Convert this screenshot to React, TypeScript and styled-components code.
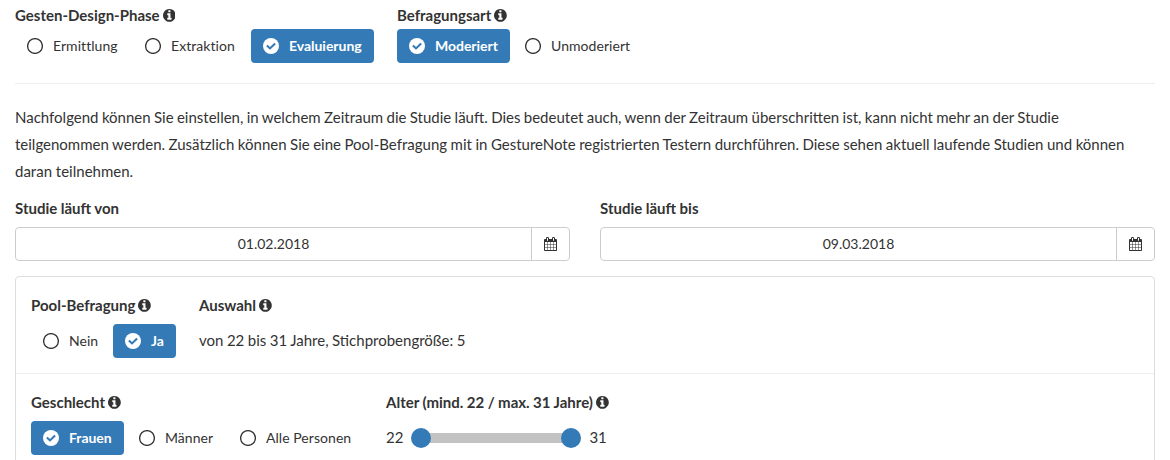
import React from "react";
import styled, { createGlobalStyle, css } from "styled-components";

const GlobalStyle = createGlobalStyle`
  * { box-sizing: border-box; }
  body {
    margin: 0;
    overflow: hidden;
    background: #fff;
    color: #333;
    font: 15px/27px Lato, sans-serif;
  }
`;

const Page = styled.main`
  height: 460px;
  padding: 0 15px;
  overflow: hidden;
`;

const Row = styled.div<{ $gap: number }>`
  display: flex;
  gap: ${(p) => p.$gap}px;
`;

const Label = styled.div`
  display: flex;
  align-items: center;
  height: 27px;
  font-weight: 700;
  word-spacing: -0.2px;
  white-space: nowrap;
  svg { width: 12.8px; height: 12.8px; margin-left: 3px; }
`;

const Choices = styled.div`
  display: flex;
`;

const Choice = styled.button<{ $active?: boolean; $w: number }>`
  display: flex;
  align-items: center;
  width: ${(p) => p.$w}px;
  height: 34px;
  padding: 0 0 0 12px;
  border: 0;
  border-radius: 4px;
  background: transparent;
  color: #333;
  font: 14px/20px Lato, sans-serif;
  letter-spacing: 0.05px;
  white-space: nowrap;
  svg { flex: none; width: 16px; height: 16px; margin-right: 10px; }
  ${(p) => p.$active && css`
    background: #337ab7;
    color: #fff;
    font-weight: 700;
    letter-spacing: -0.03px;
    & + button { margin-left: 3px; }
  `}
`;

const ChoiceText = styled.span`
  padding-bottom: 1px;
`;

const PhaseSection = styled(Row)`
  padding-top: 2px;
  height: 84px;
  border-bottom: 1px solid #eee;
`;

const Intro = styled.p`
  margin: 20px 0 10px;
  white-space: nowrap;
`;

const IntroLine = styled.span<{ $spacing?: number }>`
  display: block;
  word-spacing: ${(p) => p.$spacing ?? 0}px;
`;

const DateField = styled.div`
  width: 555px;
`;

const DateBox = styled.div`
  display: flex;
  height: 34px;
  margin-top: 5px;
  border: 1px solid #ccc;
  border-radius: 4px;
`;

const DateValue = styled.div`
  flex: 1;
  text-align: center;
  font-size: 14px;
  line-height: 32px;
`;

const CalendarButton = styled.div`
  display: flex;
  align-items: center;
  justify-content: center;
  width: 38px;
  border-left: 1px solid #ccc;
`;

const Panel = styled.section`
  height: 220px;
  margin-top: 15px;
  border: 1px solid #ddd;
  border-radius: 4px;
`;

const PanelRow = styled.div`
  display: flex;
  height: 97px;
  padding: 15px;
  border-bottom: 1px solid #eee;
  ${Label} { margin-bottom: 5px; }
`;

const Column = styled.div<{ $w?: number }>`
  width: ${(p) => (p.$w ? `${p.$w}px` : "auto")};
`;

const Summary = styled.div`
  line-height: 32px;
  word-spacing: -0.35px;
`;

const SliderRow = styled.div`
  display: flex;
  align-items: center;
  height: 34px;
  gap: 8px;
`;

const SliderValue = styled.span`
  padding-bottom: 1px;
`;

const Track = styled.div`
  display: flex;
  align-items: center;
  justify-content: space-between;
  width: 170px;
  height: 20px;
  background: linear-gradient(#c3c3c3, #c3c3c3) 10px 5px / 150px 10px no-repeat;
`;

const Handle = styled.span`
  width: 20px;
  height: 20px;
  border-radius: 50%;
  background: #337ab7;
`;

function InfoIcon() {
  return (
    <svg viewBox="0 128 1536 1536" fill="currentColor">
      <path d="M1024 1376v-160q0-14-9-23t-23-9h-96v-512q0-14-9-23t-23-9h-320q-14 0-23 9t-9 23v160q0 14 9 23t23 9h96v320h-96q-14 0-23 9t-9 23v160q0 14 9 23t23 9h448q14 0 23-9t9-23zm-128-896v-160q0-14-9-23t-23-9h-192q-14 0-23 9t-9 23v160q0 14 9 23t23 9h192q14 0 23-9t9-23zm640 416q0 209-103 385.5t-279.5 279.5-385.5 103-385.5-103-279.5-279.5-103-385.5 103-385.5 279.5-279.5 385.5-103 385.5 103 279.5 279.5 103 385.5z" />
    </svg>
  );
}

function Title({ children, info }: { children: React.ReactNode; info?: boolean }) {
  return <Label>{children}{info && <InfoIcon />}</Label>;
}

function Option({ label, active, w }: { label: string; active?: boolean; w: number }) {
  return (
    <Choice $active={active} $w={w}>
      {active ? (
        <svg viewBox="0 0 16 16">
          <circle cx="8" cy="8" r="8" fill="#fff" />
          <path d="M3.9 7.4 7 10.4l5.1-5" fill="none" stroke="#337ab7" strokeWidth="2.1" />
        </svg>
      ) : (
        <svg viewBox="0 0 16 16"><circle cx="8" cy="8" r="7.4" fill="none" stroke="currentColor" strokeWidth="1.3" /></svg>
      )}
      <ChoiceText>{label}</ChoiceText>
    </Choice>
  );
}

function CalendarIcon() {
  return (
    <svg width="13" height="14" viewBox="0 0 1664 1792" fill="#333">
      <path d="M128 1664h288v-288h-288v288zm352 0h320v-288h-320v288zm-352-352h288v-320h-288v320zm352 0h320v-320h-320v320zm-352-384h288v-288h-288v288zm736 736h320v-288h-320v288zm-384-736h320v-288h-320v288zm768 736h288v-288h-288v288zm-384-352h320v-320h-320v320zm-352-864v-288q0-13-9.500-22.500t-22.500-9.500h-64q-13 0-22.500 9.500t-9.500 22.500v288q0 13 9.500 22.500t22.500 9.500h64q13 0 22.500-9.500t9.500-22.500zm736 864h288v-320h-288v320zm-384-384h320v-288h-320v288zm384 0h288v-288h-288v288zm32-480v-288q0-13-9.500-22.500t-22.500-9.500h-64q-13 0-22.500 9.500t-9.500 22.500v288q0 13 9.500 22.500t22.500 9.500h64q13 0 22.500-9.500t9.500-22.500zm384-64v1280q0 52-38 90t-90 38h-1408q-52 0-90-38t-38-90v-1280q0-52 38-90t90-38h128v-96q0-66 47-113t113-47h64q66 0 113 47t47 113v96h384v-96q0-66 47-113t113-47h64q66 0 113 47t47 113v96h128q52 0 90 38t38 90z" />
    </svg>
  );
}

function DateInput({ label, value }: { label: string; value: string }) {
  return (
    <DateField>
      <Title>{label}</Title>
      <DateBox><DateValue>{value}</DateValue><CalendarButton><CalendarIcon /></CalendarButton></DateBox>
    </DateField>
  );
}

export default function App() {
  return (
    <Page>
      <GlobalStyle />
      <PhaseSection $gap={23}>
        <div>
          <Title info>Gesten-Design-Phase</Title>
          <Choices><Option label="Ermittlung" w={118} /><Option label="Extraktion" w={118} /><Option label="Evaluierung" w={123} active /></Choices>
        </div>
        <div>
          <Title info>Befragungsart</Title>
          <Choices><Option label="Moderiert" w={113} active /><Option label="Unmoderiert" w={120} /></Choices>
        </div>
      </PhaseSection>
      <Intro>
        <IntroLine $spacing={-0.47}>Nachfolgend können Sie einstellen, in welchem Zeitraum die Studie läuft. Dies bedeutet auch, wenn der Zeitraum überschritten ist, kann nicht mehr an der Studie</IntroLine>
        <IntroLine $spacing={-0.32}>teilgenommen werden. Zusätzlich können Sie eine Pool-Befragung mit in GestureNote registrierten Testern durchführen. Diese sehen aktuell laufende Studien und können</IntroLine>
        <IntroLine>daran teilnehmen.</IntroLine>
      </Intro>
      <Row $gap={30}>
        <DateInput label="Studie läuft von" value="01.02.2018" />
        <DateInput label="Studie läuft bis" value="09.03.2018" />
      </Row>
      <Panel>
        <PanelRow>
          <Column $w={168}>
            <Title info>Pool-Befragung</Title>
            <Choices><Option label="Nein" w={82} /><Option label="Ja" w={63} active /></Choices>
          </Column>
          <Column><Title info>Auswahl</Title><Summary>von 22 bis 31 Jahre, Stichprobengröße: 5</Summary></Column>
        </PanelRow>
        <PanelRow>
          <Column $w={355}>
            <Title info>Geschlecht</Title>
            <Choices><Option label="Frauen" w={93} active /><Option label="Männer" w={101} /><Option label="Alle Personen" w={125} /></Choices>
          </Column>
          <Column>
            <Title info>Alter (mind. 22 / max. 31 Jahre)</Title>
            <SliderRow><SliderValue>22</SliderValue><Track><Handle /><Handle /></Track><SliderValue>31</SliderValue></SliderRow>
          </Column>
        </PanelRow>
      </Panel>
    </Page>
  );
}
